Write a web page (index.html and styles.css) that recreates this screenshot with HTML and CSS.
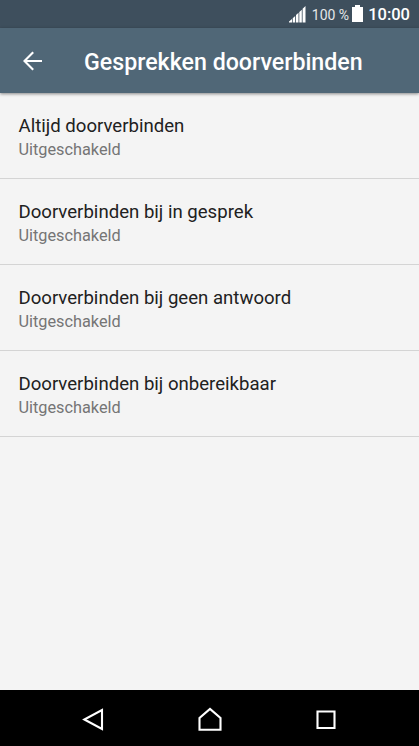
FILE: index.html
```html
<!DOCTYPE html>
<html lang="nl">
	<head>
		<meta charset="utf-8">
		<meta name="viewport" content="width=device-width, initial-scale=1.0">
		<title>Gesprekken doorverbinden</title>
		<link rel="stylesheet" href="styles.css">
	</head>
	<body>
		<div class="status-bar">
			<svg class="signal" width="17" height="17" viewBox="0 0 17 17">
				<path d="M0 16.5V15.5L3 13V16.5zM3.7 16.5V12.3L6.2 10V16.5zM7 16.5V9L9.5 6.7V16.5zM10.3 16.5V6L12.8 3.7V16.5zM13.6 16.5V2.8L16.5 0V16.5z" fill="#fff"/>
			</svg>
			<span class="percent">100 %</span>
			<svg class="battery" width="11" height="17" viewBox="0 0 11 17">
				<path d="M3 0h5v2h3v15H0V2h3z" fill="#fff"/>
			</svg>
			<span class="clock">10:00</span>
		</div>
		<header class="app-bar">
			<svg class="back" width="20" height="20" viewBox="0 0 20 20">
				<path d="M19 10H2M10.2 1.3L1.5 10l8.7 8.7" fill="none" stroke="#fff" stroke-width="2.1"/>
			</svg>
			<h1>Gesprekken doorverbinden</h1>
		</header>
		<ul class="settings">
			<li>
				<span class="name">Altijd doorverbinden</span>
				<span class="state">Uitgeschakeld</span>
			</li>
			<li>
				<span class="name">Doorverbinden bij in gesprek</span>
				<span class="state">Uitgeschakeld</span>
			</li>
			<li>
				<span class="name">Doorverbinden bij geen antwoord</span>
				<span class="state">Uitgeschakeld</span>
			</li>
			<li>
				<span class="name">Doorverbinden bij onbereikbaar</span>
				<span class="state">Uitgeschakeld</span>
			</li>
		</ul>
		<nav class="nav-bar">
			<svg width="24" height="24" viewBox="0 0 24 24">
				<path d="M20 3v19L2.3 12.5z"/>
			</svg>
			<svg width="24" height="24" viewBox="0 0 24 24">
				<path d="M1.5 22.7V11L12 2l10.5 9v11.7z"/>
			</svg>
			<svg width="24" height="24" viewBox="0 0 24 24">
				<path d="M3.5 4.5h17v16.5h-17z"/>
			</svg>
		</nav>
	</body>
</html>
```

FILE: styles.css
```css
body {
	margin: 0;
	height: 746px;
	display: flex;
	flex-direction: column;
	overflow: hidden;
	background-color: #f4f4f4;
	font-family: Roboto, sans-serif;
}
.status-bar {
	display: flex;
	align-items: center;
	justify-content: flex-end;
	box-sizing: border-box;
	height: 28px;
	padding-right: 9px;
	background-color: #3e4f5d;
	color: white;
}
.percent {
	margin-left: 6px;
	padding-top: 2px;
	font-size: 14px;
	line-height: 26px;
	color: #e4e7e9;
}
.battery {
	margin-left: 3px;
	margin-bottom: 1px;
}
.clock {
	margin-left: 5px;
	padding-top: 2px;
	font-size: 16.5px;
	font-weight: 500;
	line-height: 26px;
}
.app-bar {
	display: flex;
	align-items: center;
	height: 65px;
	padding-left: 23px;
	background-color: #506777;
	color: white;
	box-shadow: 0 1px 3px rgba(0, 0, 0, 0.45);
}
.app-bar h1 {
	margin: 2px 0 0 41px;
	font-size: 23.2px;
	font-weight: 500;
	line-height: 30px;
	white-space: nowrap;
}
.settings {
	flex: 1;
	margin: 0;
	padding: 0;
	list-style: none;
}
.settings li {
	box-sizing: border-box;
	height: 86px;
	padding: 21px 18.5px 0;
	border-bottom: 1px solid #d4d4d4;
}
.name, .state {
	display: block;
	line-height: 24px;
	white-space: nowrap;
}
.name {
	font-size: 18.6px;
	color: #212121;
}
.state {
	font-size: 16.3px;
	color: #757575;
}
.nav-bar {
	display: flex;
	align-items: center;
	justify-content: space-between;
	height: 56px;
	padding: 2px 81px 0 82px;
	box-sizing: border-box;
	background-color: black;
}
.nav-bar path {
	fill: none;
	stroke: white;
	stroke-width: 2.1;
}
```
